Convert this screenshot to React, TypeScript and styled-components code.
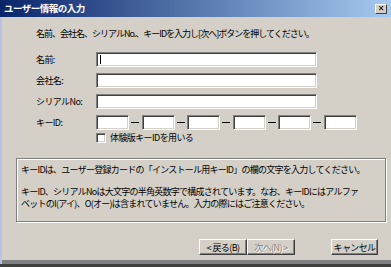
import styled, { createGlobalStyle } from "styled-components";

const GlobalStyle = createGlobalStyle`
  html, body {
    margin: 0;
    padding: 0;
    background: #d4d0c8;
  }
  body {
    font-family: "Noto Sans CJK JP", "Liberation Sans", sans-serif;
  }
`;

const Window = styled.div`
  width: 391px;
  height: 267px;
  box-sizing: border-box;
  display: flex;
  flex-direction: column;
  background: #d4d0c8;
  color: #000;
  font-size: 9px;
  line-height: 11px;
  border-bottom: 3px solid #404040;
  box-shadow: inset 0 -4px 0 #808080;
`;

const TitleBar = styled.div`
  height: 17px;
  flex: none;
  display: flex;
  align-items: center;
  justify-content: space-between;
  padding: 0 4px;
  background: linear-gradient(to right, #0a246a, #a6caf0);
`;

const TitleText = styled.span`
  color: #fff;
  font-weight: bold;
  font-size: 9.5px;
  letter-spacing: -0.5px;
`;

const CloseButton = styled.button`
  width: 12px;
  height: 10px;
  padding: 0;
  box-sizing: border-box;
  background: #d4d0c8;
  border: 1px solid;
  border-color: #fff #404040 #404040 #fff;
  font-family: "DejaVu Sans", sans-serif;
  font-size: 8px;
  font-weight: bold;
  line-height: 7px;
  color: #000;
`;

const Body = styled.div`
  flex: 1;
  display: flex;
  flex-direction: column;
  border-left: 2px solid #b8c2e4;
  padding: 11px 5px 0 14px;
`;

const Intro = styled.div`
  margin-left: 20px;
  letter-spacing: -1px;
`;

const Form = styled.div`
  margin: 13px 0 0 20px;
  display: grid;
  grid-template-columns: 60px auto;
  grid-auto-rows: 15px;
  row-gap: 6px;
  align-items: center;
`;

const Label = styled.span`
  letter-spacing: -0.6px;
`;

const TextBox = styled.div<{ $w?: number; $caret?: boolean }>`
  width: ${(p) => p.$w ?? 221}px;
  height: 15px;
  box-sizing: border-box;
  background: #fff;
  border: 1px solid;
  border-color: #808080 #fff #fff #808080;
  box-shadow: inset 1px 1px 0 #404040, inset -1px -1px 0 #d4d0c8;
  position: relative;
  &::after {
    content: "";
    display: ${(p) => (p.$caret ? "block" : "none")};
    position: absolute;
    left: 3px;
    top: 2px;
    width: 1px;
    height: 9px;
    background: #000;
  }
`;

const KeyRow = styled.div`
  display: flex;
  align-items: center;
`;

const Dash = styled.span`
  width: 12.5px;
  display: flex;
  justify-content: center;
  &::before {
    content: "";
    width: 8px;
    height: 1px;
    background: #000;
  }
`;

const CheckRow = styled.label`
  margin: 2px 0 0 80px;
  height: 11px;
  display: flex;
  align-items: center;
  gap: 4px;
  letter-spacing: -0.6px;
`;

const CheckBox = styled.span`
  width: 10px;
  height: 10px;
  box-sizing: border-box;
  background: #fff;
  border: 1px solid;
  border-color: #808080 #fff #fff #808080;
  box-shadow: inset 1px 1px 0 #404040, inset -1px -1px 0 #d4d0c8;
`;

const InfoBox = styled.div`
  margin-top: 15px;
  height: 64px;
  box-sizing: border-box;
  border: 1px solid #808080;
  box-shadow: inset 1px 1px 0 #fff, 1px 1px 0 #fff;
  padding: 5px 4px;
  line-height: 12px;
  letter-spacing: -0.75px;
  white-space: nowrap;
`;

const Para = styled.p`
  margin: 0 0 10px;
  &:last-child {
    margin: 0;
  }
`;

const ButtonRow = styled.div`
  margin-top: 17px;
  display: flex;
  padding-left: 183px;
`;

const PushButton = styled.button<{ $gap?: number; $w?: number }>`
  width: ${(p) => p.$w ?? 48}px;
  height: 16px;
  padding: 0;
  margin-left: ${(p) => p.$gap ?? 0}px;
  box-sizing: border-box;
  background: #d4d0c8;
  border: 1px solid;
  border-color: #fff #404040 #404040 #fff;
  box-shadow: inset -1px -1px 0 #808080;
  font-family: inherit;
  font-size: 9px;
  letter-spacing: -0.6px;
  color: #000;
  &:disabled {
    color: #808080;
    text-shadow: 1px 1px 0 #fff;
  }
`;

export default function App() {
  return (
    <>
      <GlobalStyle />
      <Window>
        <TitleBar>
          <TitleText>ユーザー情報の入力</TitleText>
          <CloseButton aria-label="Close">✕</CloseButton>
        </TitleBar>
        <Body>
          <Intro>名前、会社名、シリアルNo.、キーIDを入力し[次へ]ボタンを押してください。</Intro>
          <Form>
            <Label>名前:</Label>
            <TextBox $caret />
            <Label>会社名:</Label>
            <TextBox />
            <Label>シリアルNo:</Label>
            <TextBox />
            <Label>キーID:</Label>
            <KeyRow>
              <TextBox $w={33} />
              <Dash />
              <TextBox $w={33} />
              <Dash />
              <TextBox $w={33} />
              <Dash />
              <TextBox $w={33} />
              <Dash />
              <TextBox $w={33} />
              <Dash />
              <TextBox $w={33} />
            </KeyRow>
          </Form>
          <CheckRow>
            <CheckBox />
            体験版キーIDを用いる
          </CheckRow>
          <InfoBox>
            <Para>キーIDは、ユーザー登録カードの「インストール用キーID」の欄の文字を入力してください。</Para>
            <Para>
              キーID、シリアルNoは大文字の半角英数字で構成されています。なお、キーIDにはアルファ
              <br />
              ベットのI(アイ)、O(オー)は含まれていません。入力の際にはご注意ください。
            </Para>
          </InfoBox>
          <ButtonRow>
            <PushButton>&lt; 戻る(B)</PushButton>
            <PushButton disabled>次へ(N) &gt;</PushButton>
            <PushButton $gap={36} $w={47}>キャンセル</PushButton>
          </ButtonRow>
        </Body>
      </Window>
    </>
  );
}
